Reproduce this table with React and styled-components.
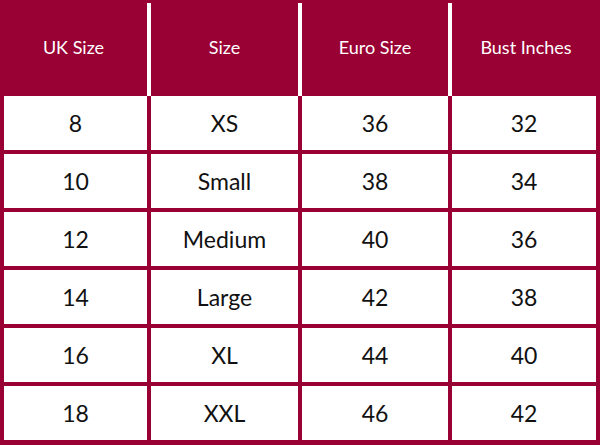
import React from "react";
import styled, { createGlobalStyle } from "styled-components";

const GlobalStyle = createGlobalStyle`
    html, body {
        margin: 0;
        padding: 0;
        background: #ffffff;
    }
`

const CRIMSON = "#990033";

const SizeChart = styled.div`
    width: 600px;
    height: 445px;
    background: ${CRIMSON};
    font-family: Lato, "Open Sans", sans-serif;
    box-sizing: border-box;
`

const HeaderRow = styled.div`
    display: grid;
    grid-template-columns: 147px 147px 146px 148px;
    column-gap: 4px;
    height: 96px;
    padding-top: 3px;
    box-sizing: border-box;
`

const HeaderCell = styled.div`
    display: flex;
    align-items: center;
    justify-content: center;
    padding-bottom: 6px;
    color: #ffffff;
    font-size: 18px;
    background: ${CRIMSON};
    box-shadow: ${props => props.first ? "none" : "-4px 0 0 #ffffff"};
`

const Body = styled.div`
    display: grid;
    grid-template-columns: 143px 147px 146px 144px;
    grid-auto-rows: 54px;
    gap: 4px;
    padding: 0 4px 5px 4px;
`

const Cell = styled.div`
    display: flex;
    align-items: center;
    justify-content: center;
    background: #ffffff;
    color: #111111;
    font-size: 23px;
`

const columns = ["UK Size", "Size", "Euro Size", "Bust Inches"];

const rows = [
    ["8", "XS", "36", "32"],
    ["10", "Small", "38", "34"],
    ["12", "Medium", "40", "36"],
    ["14", "Large", "42", "38"],
    ["16", "XL", "44", "40"],
    ["18", "XXL", "46", "42"],
];

const App = () => {
    return (
        <>
            <GlobalStyle />
            <SizeChart>
                <HeaderRow>
                    {columns.map((label, i) => (
                        <HeaderCell key={label} first={i === 0}>{label}</HeaderCell>
                    ))}
                </HeaderRow>
                <Body>
                    {rows.map(row => row.map((value, i) => (
                        <Cell key={row[0] + "-" + i}>{value}</Cell>
                    )))}
                </Body>
            </SizeChart>
        </>
    )
}

export default App;
